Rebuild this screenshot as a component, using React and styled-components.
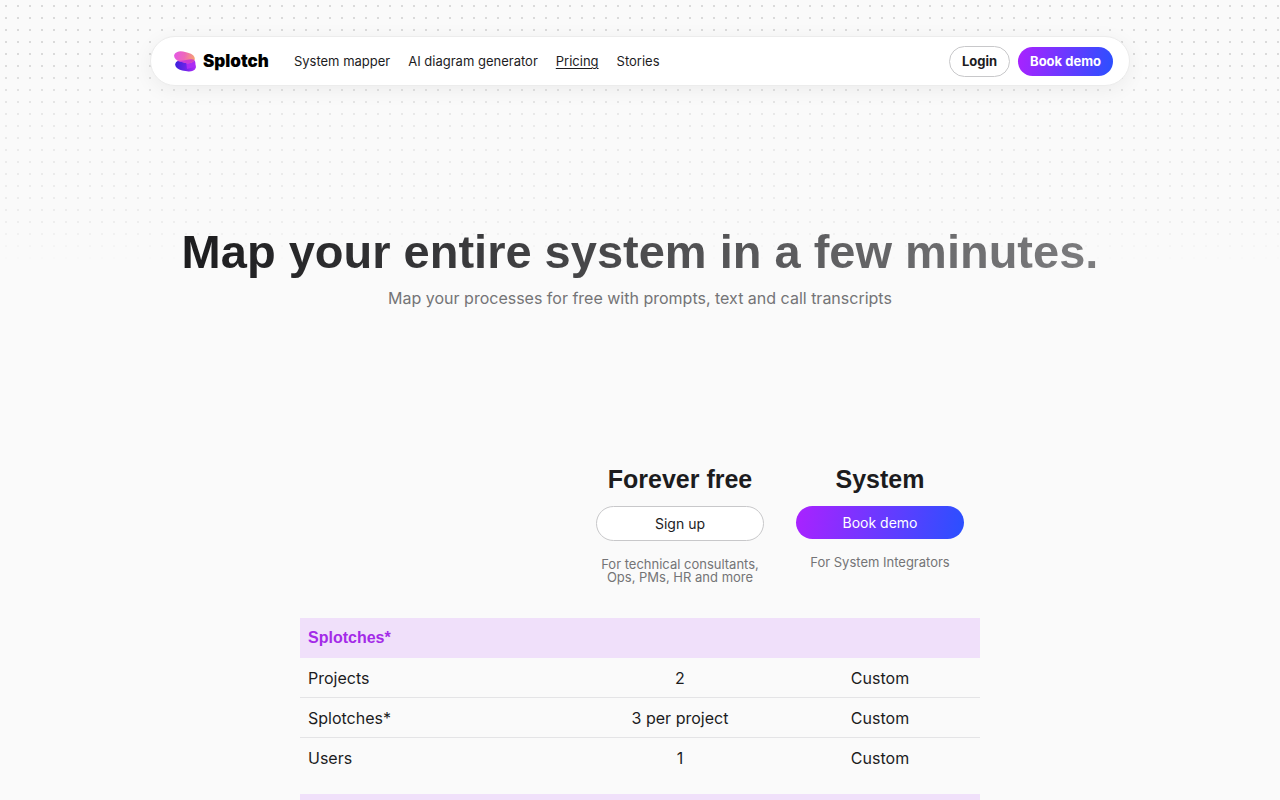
import React from 'react';
import styled, { createGlobalStyle, css } from 'styled-components';

const links = [
    { label: 'System mapper' },
    { label: 'AI diagram generator' },
    { label: 'Pricing', active: true },
    { label: 'Stories' },
];

const rows = [
    { name: 'Projects', free: '2', system: 'Custom' },
    { name: 'Splotches*', free: '3 per project', system: 'Custom' },
    { name: 'Users', free: '1', system: 'Custom' },
];

const Logo = () => (
    <svg width="23" height="21" viewBox="0 0 23 21" aria-hidden="true">
        <defs>
            <linearGradient id="logoTop">
                <stop offset="0" stopColor="#e458e4" />
                <stop offset="0.5" stopColor="#ee68b8" />
                <stop offset="1" stopColor="#f6a86c" />
            </linearGradient>
            <linearGradient id="logoBottom">
                <stop offset="0" stopColor="#3c20dc" />
                <stop offset="0.5" stopColor="#6a24e8" />
                <stop offset="1" stopColor="#b02cf6" />
            </linearGradient>
            <linearGradient id="logoOverlap">
                <stop offset="0" stopColor="#c43ae8" />
                <stop offset="1" stopColor="#d23cc8" />
            </linearGradient>
            <clipPath id="logoClip">
                <rect x="1" y="1" width="21" height="10.500" rx="8" ry="5.250" transform="rotate(12 11.500 6)" />
            </clipPath>
        </defs>
        <rect x="2" y="9.500" width="21" height="10.500" rx="8" ry="5.250" transform="rotate(10 12.500 15)" fill="url(#logoBottom)" />
        <path d="M21 9C22.500 10 22.700 13 22.300 16L14 18L13 10Z" fill="#ac2cf4" />
        <rect x="1" y="1" width="21" height="10.500" rx="8" ry="5.250" transform="rotate(12 11.500 6)" fill="url(#logoTop)" />
        <path d="M2 12C5 9.500 9 9.700 13 9C17 8.200 20 7.800 23 9.500V14H2Z" clipPath="url(#logoClip)" fill="url(#logoOverlap)" />
    </svg>
);

const App = () => (
    <Page>
        <GlobalStyle />
        <Header>
            <Brand href="#">
                <Logo />
                <span>Splotch</span>
            </Brand>
            <Nav>
                {links.map(({ label, active }) => (
                    <NavLink key={label} href="#" $active={active}>{label}</NavLink>
                ))}
            </Nav>
            <SmallButton>Login</SmallButton>
            <SmallButton $primary>Book demo</SmallButton>
        </Header>
        <Hero>
            <Title>Map your entire system in a few minutes.</Title>
            <Subtitle>Map your processes for free with prompts, text and call transcripts</Subtitle>
        </Hero>
        <Table>
            <colgroup>
                <col />
                <PlanCol />
                <PlanCol />
            </colgroup>
            <thead>
                <tr>
                    <td />
                    <PlanCell scope="col">
                        <PlanName>Forever free</PlanName>
                        <PlanButton>Sign up</PlanButton>
                        <PlanNote>For technical consultants, Ops, PMs, HR and more</PlanNote>
                    </PlanCell>
                    <PlanCell scope="col">
                        <PlanName>System</PlanName>
                        <PlanButton $primary>Book demo</PlanButton>
                        <PlanNote>For System Integrators</PlanNote>
                    </PlanCell>
                </tr>
            </thead>
            <tbody>
                <tr>
                    <SectionCell colSpan={3} scope="colgroup">Splotches*</SectionCell>
                </tr>
                {rows.map(({ name, free, system }) => (
                    <Row key={name}>
                        <NameCell scope="row">{name}</NameCell>
                        <Cell>{free}</Cell>
                        <Cell>{system}</Cell>
                    </Row>
                ))}
                <tr>
                    <SpacerCell colSpan={3} />
                </tr>
            </tbody>
            <tbody>
                <tr>
                    <SectionCell as="td" colSpan={3} />
                </tr>
            </tbody>
        </Table>
    </Page>
);

const GlobalStyle = createGlobalStyle`
    * {
        box-sizing: border-box;
    }

    body {
        margin: 0;
        color: #1c1c1e;
        background-color: #fafafa;
        font-family: Inter, 'Liberation Sans', sans-serif;
    }
`;

const gradient = css`
    color: #fff;
    background: linear-gradient(100deg, #aa22ff, #2a50ff);
    border: none;
`;

const outline = css`
    color: #1c1c1e;
    background: #fff;
    border: 1px solid #c8c8ca;
`;

const Page = styled.div`
    position: relative;
    display: flex;
    flex-direction: column;
    align-items: center;
    padding: 36px 16px 0;

    /* dotted backdrop that fades out behind the title */
    &::before {
        content: '';
        position: absolute;
        z-index: -1;
        top: 0;
        left: 0;
        right: 0;
        height: 264px;
        background-image: conic-gradient(from 90deg at 10px 10px, #dadada 90deg, transparent 0);
        background-size: 12px 12px;
        background-position: -5px -5px;
        mask-image: linear-gradient(#000 60px, rgba(0, 0, 0, 0.5) 120px, rgba(0, 0, 0, 0.4) 220px, transparent);
    }
`;

const Header = styled.header`
    display: flex;
    align-items: center;
    gap: 8px;
    width: 100%;
    max-width: 980px;
    height: 50px;
    padding: 0 16px 0 22px;
    background: #fff;
    border: 1px solid #ececec;
    border-radius: 25px;
    box-shadow: 0 4px 20px rgba(0, 0, 0, 0.06);
`;

const Brand = styled.a`
    display: flex;
    align-items: center;
    gap: 7px;
    color: #000;
    font-size: 17px;
    font-weight: 900;
    text-decoration: none;
`;

const Nav = styled.nav`
    display: flex;
    flex: 1;
    gap: 18px;
    margin-left: 17px;
`;

const NavLink = styled.a`
    color: #1c1c1e;
    font-size: 13px;
    line-height: 16px;
    text-decoration: ${({ $active }) => ($active ? 'underline' : 'none')};
    text-underline-offset: 2px;
`;

const SmallButton = styled.button`
    padding: 0 12px;
    height: ${({ $primary }) => ($primary ? 29 : 31)}px;
    border-radius: 16px;
    font-family: inherit;
    font-size: 13px;
    font-weight: 700;
    ${({ $primary }) => ($primary ? gradient : outline)}
`;

const Hero = styled.section`
    padding: 136px 0 150px;
    text-align: center;
`;

const Title = styled.h1`
    margin: 0;
    color: transparent;
    background: linear-gradient(90deg, #1c1c1e, #7c7c7e);
    background-clip: text;
    font-family: 'Liberation Sans', Arial, sans-serif;
    font-size: 47px;
    font-weight: 700;
    line-height: 60px;
`;

const Subtitle = styled.p`
    margin: 6px 0 0;
    color: #747476;
    font-size: 16px;
    line-height: 20px;
`;

const Table = styled.table`
    width: 100%;
    max-width: 680px;
    border-spacing: 0;
    table-layout: fixed;
`;

const PlanCol = styled.col`
    width: 200px;
`;

const PlanCell = styled.th`
    height: 160px;
    padding: 6px 16px 0;
    vertical-align: top;
    font-weight: 400;
`;

const PlanName = styled.div`
    font-family: 'Liberation Sans', Arial, sans-serif;
    font-size: 25px;
    font-weight: 700;
    line-height: 30px;
`;

const PlanButton = styled.button`
    width: 100%;
    height: ${({ $primary }) => ($primary ? 33 : 35)}px;
    margin-top: 12px;
    border-radius: 18px;
    font-family: inherit;
    font-size: 14px;
    ${({ $primary }) => ($primary ? gradient : outline)}
`;

const PlanNote = styled.p`
    margin: 17px 0 0;
    color: #747476;
    font-size: 13px;
    line-height: 13px;
`;

const SectionCell = styled.th`
    height: 40px;
    padding: 0 8px;
    color: #a42be8;
    background: #f0e0fa;
    font-family: 'Liberation Sans', Arial, sans-serif;
    font-size: 16px;
    font-weight: 700;
    text-align: left;
`;

const Cell = styled.td`
    height: 40px;
    padding: 0 8px;
    border-bottom: 1px solid transparent;
    font-size: 16px;
    text-align: center;
`;

const NameCell = styled(Cell).attrs({ as: 'th' })`
    font-weight: 400;
    text-align: left;
`;

const Row = styled.tr`
    &:has(+ &) > * {
        border-bottom-color: #e4e4e6;
    }
`;

const SpacerCell = styled.td`
    height: 16px;
    padding: 0;
`;

export default App;
